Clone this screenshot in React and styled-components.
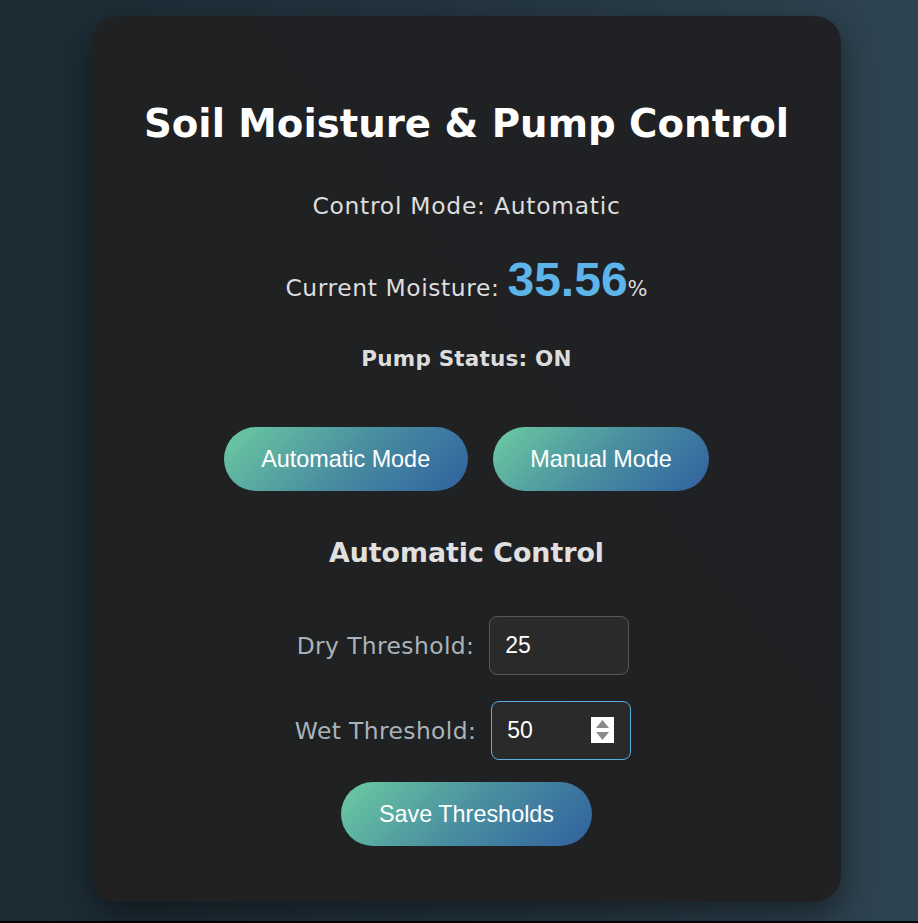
import React from "react";
import styled, { createGlobalStyle } from "styled-components";

const GlobalStyle = createGlobalStyle`
  html { background: #000; }
  body {
    margin: 0;
    min-height: 921px;
    background: linear-gradient(90deg, #1b2a33 0%, #243641 55%, #2f4452 100%);
    font-family: "DejaVu Sans", "Liberation Sans", sans-serif;
  }
`;

const Page = styled.div`
  display: flex;
  justify-content: center;
  padding: 16px 0 0 15px;
`;

const Card = styled.main`
  width: 749px;
  height: 886px;
  box-sizing: border-box;
  padding-top: 80px;
  border-radius: 26px;
  background: linear-gradient(to top right, #1f201f 0%, #202123 45%, #202124 100%);
  box-shadow: 0 14px 34px rgba(0, 0, 0, 0.45);
  display: flex;
  flex-direction: column;
  align-items: center;
  color: #e3e3e3;
`;

const Title = styled.h1`
  margin: 0;
  font-size: 38.7px;
  line-height: 56px;
  font-weight: 700;
  color: #ffffff;
  white-space: nowrap;
`;

const Line = styled.p`
  margin: ${(p) => p.$mt}px 0 0;
  font-size: ${(p) => (p.$bold ? "21.5px" : "23.4px")};
  letter-spacing: ${(p) => (p.$bold ? "0.2px" : "0.75px")};
  line-height: 32px;
  font-weight: ${(p) => (p.$bold ? 700 : 400)};
  color: ${(p) => p.$color || "#dddddd"};
  white-space: nowrap;
`;

const MoistureRow = styled.p`
  margin: 28px 0 0;
  height: 60px;
  display: flex;
  align-items: baseline;
  font-size: 23.4px;
  letter-spacing: 0.6px;
  line-height: 60px;
  color: #dddddd;
`;

const Value = styled.span`
  margin-left: 8px;
  font-family: "Liberation Sans", Arial, sans-serif;
  font-size: 48px;
  letter-spacing: 0;
  font-weight: 700;
  color: #5db4e8;
`;

const Unit = styled.span`
  font-size: 21px;
  letter-spacing: 0;
`;

const ButtonRow = styled.div`
  margin-top: 52px;
  display: flex;
  gap: 25px;
`;

const PillButton = styled.button`
  height: 64px;
  padding: 0 37.5px;
  border: none;
  border-radius: 32px;
  background: linear-gradient(135deg, #6ccca2 0%, #4a8fa0 50%, #30619f 100%);
  color: #ffffff;
  font-family: "Liberation Sans", Arial, sans-serif;
  font-size: 23.4px;
  cursor: pointer;
  margin-top: ${(p) => p.$mt || 0}px;
`;

const Subtitle = styled.h2`
  margin: 44px 0 0;
  font-size: 26.8px;
  line-height: 36px;
  font-weight: 700;
  color: #e0e0e0;
`;

const FieldRow = styled.label`
  margin-top: ${(p) => p.$mt}px;
  padding-right: 7px;
  display: flex;
  align-items: center;
  gap: 15px;
`;

const FieldLabel = styled.span`
  font-size: 23.4px;
  letter-spacing: 0.4px;
  color: #a9b3ba;
`;

const InputWrap = styled.span`
  position: relative;
  display: inline-flex;
`;

const NumberInput = styled.input`
  width: 140px;
  height: 59px;
  box-sizing: border-box;
  padding: 0 15px;
  border: 1px solid ${(p) => (p.$focused ? "#5aaee0" : "#555759")};
  border-radius: 8px;
  background: #2a2a2a;
  color: #ffffff;
  font-family: "Liberation Sans", Arial, sans-serif;
  font-size: 23px;
  outline: none;
  -moz-appearance: textfield;
  &::-webkit-inner-spin-button,
  &::-webkit-outer-spin-button {
    -webkit-appearance: none;
    margin: 0;
  }
`;

const Spinner = styled.svg`
  position: absolute;
  right: 17px;
  top: 16px;
  pointer-events: none;
`;

function SpinIcon() {
  return (
    <Spinner width="23" height="26" viewBox="0 0 23 26">
      <rect width="23" height="26" fill="#ffffff" />
      <path d="M11.5 3 L18 11 H5 Z" fill="#8a8a8a" />
      <path d="M11.5 23 L18 15 H5 Z" fill="#8a8a8a" />
    </Spinner>
  );
}

export default function App() {
  return (
    <>
      <GlobalStyle />
      <Page>
        <Card>
          <Title>Soil Moisture &amp; Pump Control</Title>
          <Line $mt={38}>Control Mode: Automatic</Line>
          <MoistureRow>
            Current Moisture:
            <Value>35.56</Value>
            <Unit>%</Unit>
          </MoistureRow>
          <Line $mt={33} $bold $color="#dcdcdc">
            Pump Status: ON
          </Line>
          <ButtonRow>
            <PillButton>Automatic Mode</PillButton>
            <PillButton>Manual Mode</PillButton>
          </ButtonRow>
          <Subtitle>Automatic Control</Subtitle>
          <FieldRow $mt={45}>
            <FieldLabel>Dry Threshold:</FieldLabel>
            <InputWrap>
              <NumberInput type="number" defaultValue={25} />
            </InputWrap>
          </FieldRow>
          <FieldRow $mt={26}>
            <FieldLabel>Wet Threshold:</FieldLabel>
            <InputWrap>
              <NumberInput type="number" defaultValue={50} $focused />
              <SpinIcon />
            </InputWrap>
          </FieldRow>
          <PillButton $mt={22}>Save Thresholds</PillButton>
        </Card>
      </Page>
    </>
  );
}
